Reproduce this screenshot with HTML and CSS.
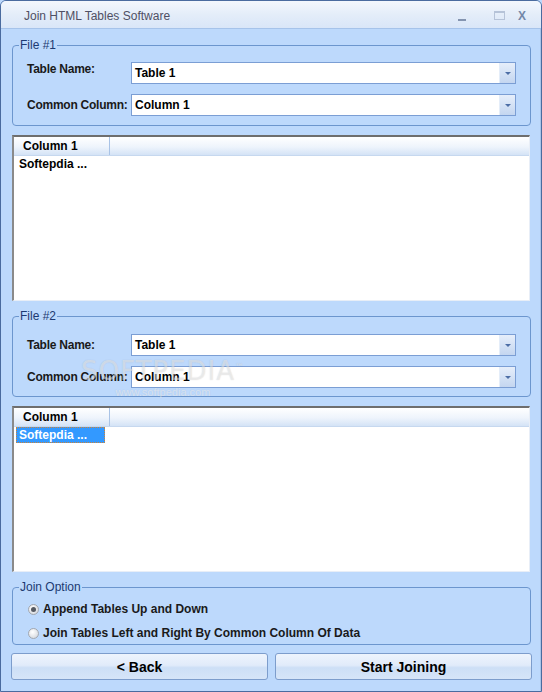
FILE: index.html
```html
<!DOCTYPE html>
<html lang="en">
<head>
  <meta charset="UTF-8" />
  <meta name="viewport" content="width=device-width, initial-scale=1.0" />
  <title>Join HTML Tables Software</title>
  <link rel="stylesheet" href="styles.css">
</head>
<body>
  <div class="window">
    <!-- Title bar -->
    <div class="titlebar">
      <span class="title">Join HTML Tables Software</span>
      <div class="controls">
        <span class="ctl ctl-min"></span>
        <span class="ctl ctl-max"></span>
        <span class="ctl ctl-close">X</span>
      </div>
    </div>

    <div class="client">
      <!-- File #1 -->
      <fieldset class="group">
        <legend>File #1</legend>
        <div class="row row-gap">
          <label class="label label-top">Table Name:</label>
          <div class="combo"><span class="combo-text">Table 1</span><span class="drop"></span></div>
        </div>
        <div class="row">
          <label class="label">Common Column:</label>
          <div class="combo"><span class="combo-text">Column 1</span><span class="drop"></span></div>
        </div>
      </fieldset>

      <div class="list">
        <div class="list-head"><span class="col">Column 1</span></div>
        <div class="list-row">Softepdia ...</div>
      </div>

      <!-- File #2 -->
      <fieldset class="group group-next group-lower">
        <legend>File #2</legend>
        <div class="row row-gap">
          <label class="label">Table Name:</label>
          <div class="combo"><span class="combo-text">Table 1</span><span class="drop"></span></div>
        </div>
        <div class="row">
          <label class="label">Common Column:</label>
          <div class="combo"><span class="combo-text">Column 1</span><span class="drop"></span></div>
        </div>
      </fieldset>

      <div class="list">
        <div class="list-head"><span class="col">Column 1</span></div>
        <div class="list-row selected">Softepdia ...</div>
      </div>

      <!-- Join option -->
      <fieldset class="group group-next group-options">
        <legend>Join Option</legend>
        <label class="radio-row"><span class="radio checked"></span>Append Tables Up and Down</label>
        <label class="radio-row"><span class="radio"></span>Join Tables Left and Right By Common Column Of Data</label>
      </fieldset>

      <div class="buttons">
        <button class="btn">&lt; Back</button>
        <button class="btn">Start Joining</button>
      </div>

      <div class="watermark">
        <span class="wm-big">SOFTPEDIA<sup>™</sup></span>
        <span class="wm-small">www.softpedia.com</span>
      </div>
    </div>
  </div>
</body>
</html>
```

FILE: styles.css
```css
body {
  margin: 0;
  font-family: "Liberation Sans", Arial, sans-serif;
  background-color: #bdd9fc;
}
.window {
  width: 542px;
  height: 692px;
  box-sizing: border-box;
  border: 1px solid #4a6b9f;
  border-radius: 6px 6px 0 0;
  background-color: #bdd9fc;
  overflow: hidden;
  position: relative;
}
.titlebar {
  height: 27px;
  border-bottom: 1px solid #a6c3ea;
  background: linear-gradient(#f3f7fd, #e4edf9 50%, #d9e6f8);
  display: flex;
  align-items: center;
  justify-content: space-between;
}
.title {
  margin-left: 23px;
  margin-top: 3px;
  font-size: 12px;
  color: #4f5064;
}
.controls {
  display: flex;
  align-items: center;
  margin-right: 15px;
  margin-top: 2px;
}
.ctl {
  display: inline-block;
}
.ctl-min {
  width: 8px;
  height: 2px;
  margin-top: 8px;
  background-color: #8494b0;
}
.ctl-max {
  width: 9px;
  height: 6px;
  margin-left: 28px;
  border: 1px solid #b6c3d8;
  border-top-width: 2px;
}
.ctl-close {
  margin-left: 13px;
  font-size: 12px;
  font-weight: bold;
  color: #7387a8;
}

.client {
  position: relative;
  padding: 9px 10px 0 10px;
  border-right: 1px solid #a9c4e9;
  height: 655px;
}

/* group boxes */
.group {
  margin: 0 0 0 1px;
  width: 519px;
  box-sizing: border-box;
  padding: 10px 0 9px 0;
  border: 1px solid #6c96ce;
  border-radius: 4px;
}
.group legend {
  margin-left: 6px;
  padding: 0 1px;
  font-size: 12px;
  line-height: 14px;
  color: #1c3a72;
}
.group-next {
  margin-top: 8px;
}
.group-lower {
  padding-top: 11px;
  padding-bottom: 8px;
}
.row {
  display: flex;
  align-items: center;
  height: 22px;
  padding-left: 14px;
}
.row-gap {
  margin-bottom: 10px;
}
.label {
  width: 104px;
  font-size: 12px;
  font-weight: bold;
  letter-spacing: -0.25px;
  color: #1a1a1a;
}
.label-top {
  align-self: flex-start;
  line-height: 14px;
}
.combo {
  width: 385px;
  height: 22px;
  box-sizing: border-box;
  border: 1px solid #7b9ed4;
  background-color: #fff;
  display: flex;
  align-items: center;
  justify-content: space-between;
}
.combo-text {
  padding-left: 3px;
  font-size: 12px;
  font-weight: bold;
  color: #000;
}
.drop {
  width: 16px;
  height: 20px;
  box-sizing: border-box;
  border-left: 1px solid #e4edf9;
  background: linear-gradient(#e6eefa, #d3e1f5 55%, #c4d6f0);
  position: relative;
}
.drop::after {
  content: "";
  position: absolute;
  left: 5px;
  top: 9px;
  border-left: 3px solid transparent;
  border-right: 3px solid transparent;
  border-top: 3px solid #4d6ea6;
}

/* list views */
.list {
  margin: 9px 0 0 1px;
  width: 518px;
  height: 166px;
  box-sizing: border-box;
  border-style: solid;
  border-width: 2px 1px 1px 2px;
  border-color: #6e6e6e #e8eef7 #e8eef7 #8a8a8a;
  background-color: #fff;
}
.list-head {
  height: 19px;
  box-sizing: border-box;
  border-bottom: 1px solid #c6d8ef;
  background: linear-gradient(#ffffff, #eef4fc 55%, #d4e3f6);
  display: flex;
}
.col {
  width: 96px;
  box-sizing: border-box;
  padding-left: 9px;
  border-right: 1px solid #a9c3e6;
  font-size: 12px;
  font-weight: bold;
  line-height: 18px;
  color: #000;
}
.list-row {
  width: 89px;
  height: 16px;
  box-sizing: border-box;
  margin-left: 2px;
  padding-left: 3px;
  font-size: 12px;
  font-weight: bold;
  line-height: 16px;
  color: #000;
}
.list-row.selected {
  background-color: #3399ff;
  color: #fff;
  outline: 1px dotted #c9833a;
  outline-offset: -1px;
}

/* join options */
.group-options {
  padding: 5px 0 1px 0;
}
.radio-row {
  display: flex;
  align-items: center;
  height: 20px;
  padding-left: 15px;
  font-size: 12px;
  font-weight: bold;
  color: #1a1a1a;
}
.radio-row + .radio-row {
  margin-top: 4px;
}
.radio {
  width: 11px;
  height: 11px;
  box-sizing: border-box;
  margin-right: 4px;
  border: 1px solid #a3a8b0;
  border-radius: 50%;
  background: radial-gradient(circle at 40% 35%, #ffffff, #dcdfe4 70%, #c7cbd2);
  position: relative;
}
.radio.checked::after {
  content: "";
  position: absolute;
  left: 2px;
  top: 2px;
  width: 5px;
  height: 5px;
  border-radius: 50%;
  background-color: #555a63;
}

/* bottom buttons */
.buttons {
  margin-top: 8px;
  display: grid;
  grid-template-columns: 257px 257px;
  gap: 7px;
}
.btn {
  height: 27px;
  border: 1px solid #7d9dcc;
  border-radius: 3px;
  background: linear-gradient(#eef4fd, #e1ebfa 45%, #cddff6 55%, #d6e5f8);
  font-family: "Liberation Sans", Arial, sans-serif;
  font-size: 14px;
  font-weight: bold;
  color: #000;
  cursor: pointer;
}

/* softpedia watermark */
.watermark {
  position: absolute;
  left: 80px;
  top: 327px;
  display: flex;
  flex-direction: column;
  align-items: center;
  pointer-events: none;
}
.wm-big {
  font-family: "DejaVu Sans", sans-serif;
  font-size: 26px;
  letter-spacing: 1px;
  color: rgba(255, 255, 255, 0.45);
  text-shadow: 0 0 1px rgba(90, 90, 90, 0.25);
}
.wm-big sup {
  font-size: 9px;
}
.wm-small {
  font-size: 11px;
  color: rgba(255, 255, 255, 0.5);
  text-shadow: 0 0 1px rgba(90, 90, 90, 0.2);
}
```
